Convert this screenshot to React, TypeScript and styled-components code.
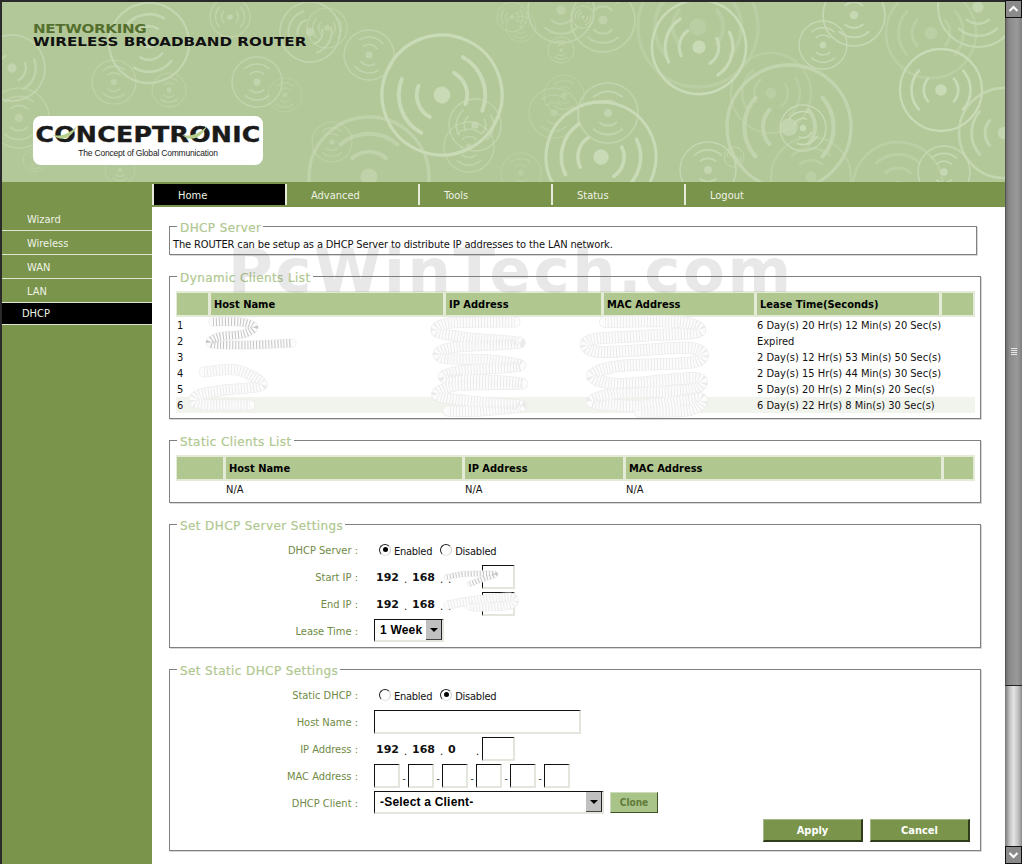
import React from "react";
import styled, { createGlobalStyle } from "styled-components";

const GREEN = "#7a944b";
const PALE = "#b0c890";
const BODY = `"DejaVu Sans Condensed", "DejaVu Sans", Tahoma, sans-serif`;

const Global = createGlobalStyle`
  html, body { margin: 0; padding: 0; background: #fff; overflow: hidden; }
  * { box-sizing: border-box; }
  body { font-family: ${BODY}; font-size: 11px; color: #111; }
`;

const Page = styled.div`position: relative; display: flex; width: 1022px; height: 864px; overflow: hidden;`;
const Viewport = styled.div`flex: 1; min-width: 0; height: 864px; border-top: 2px solid #2a2a2a; border-left: 2px solid #2a2a2a; display: flex; flex-direction: column;`;

/* ---- banner ---- */
const Banner = styled.header`position: relative; height: 180px; background: #b3c899; overflow: hidden; flex: none;`;
const BannerArt = styled.svg`position: absolute; inset: 0; width: 100%; height: 100%;`;
const Titles = styled.div`position: absolute; left: 31px; top: 20px; font-family: "DejaVu Sans", sans-serif; font-weight: 700; font-size: 12.5px; line-height: 13px; transform-origin: 0 0; transform: scaleX(1.21);`;
const TitleTop = styled.div`color: #55702e; letter-spacing: -0.3px;`;
const TitleBottom = styled.div`color: #111;`;
const LogoCard = styled.div`position: absolute; left: 31px; top: 114px; width: 230px; height: 49px; background: #fff; border-radius: 8px; text-align: center; color: #1a1a1a; overflow: hidden;`;
const LogoWord = styled.div`font-family: "DejaVu Sans", sans-serif; font-weight: 700; font-size: 21px; line-height: 24px; margin-top: 7px; transform: scaleX(1.2); letter-spacing: 0.2px; -webkit-text-stroke: 0.4px #1a1a1a;`;
const LogoTag = styled.div`font-family: "Liberation Sans", sans-serif; font-size: 8.5px; line-height: 11px; margin-top: 1px; letter-spacing: -0.2px;`;
const Swoosh = styled.svg`position: absolute; left: 0; top: 0; width: 230px; height: 49px;`;

/* ---- nav ---- */
const NavBar = styled.nav`height: 25px; flex: none; background: ${GREEN}; display: flex; padding: 2px 0 2px 150px;`;
const Tab = styled.a<{ $active?: boolean }>`
  width: 133px; height: 21px; border-left: 2px solid #e6ebdc; padding-left: 24px;
  line-height: 24px; color: #eef2e4; font-size: 11px;
  background: ${(p) => (p.$active ? "#000" : "transparent")};
`;

/* ---- body ---- */
const Main = styled.div`flex: 1; display: flex; min-height: 0;`;
const Sidebar = styled.aside`width: 150px; flex: none; background: ${GREEN};`;
const SideItem = styled.div<{ $active?: boolean }>`
  height: ${(p) => (p.$active ? 22 : 24)}px;
  line-height: ${(p) => (p.$active ? 21 : 25)}px;
  padding-left: ${(p) => (p.$active ? 20 : 25)}px;
  border-bottom: 1px solid #dfe5d3;
  color: #f0f3e8;
  background: ${(p) => (p.$active ? "#000" : "transparent")};
`;
const Content = styled.main`flex: 1; min-width: 0; background: #fff; padding: 12px 0 0 17px;`;

const Box = styled.fieldset<{ $w?: number }>`
  display: block; width: ${(p) => p.$w ?? 812}px; margin: 0 0 14px; min-width: 0;
  padding: 0; border: 1px solid #808080;
  box-shadow: 1px 1px 0 #d8d8d8;
`;
const Legend = styled.legend`
  margin-left: 7px; padding: 0 2px 0 3px; height: 14px; line-height: 18px;
  font-family: "DejaVu Sans", sans-serif; font-size: 12px; color: ${PALE}; letter-spacing: 0.4px; -webkit-text-stroke: 0.2px ${PALE};
`;
const Intro = styled.p`margin: 0; padding: 3px 0 0 3px; height: 21px; line-height: 18px; letter-spacing: -0.13px; white-space: nowrap;`;
const TableWrap = styled.div<{ $top: number; $bottom: number }>`padding: ${(p) => p.$top}px 0 ${(p) => p.$bottom}px 6px;`;
const Table = styled.table`border-collapse: separate; border-spacing: 0; table-layout: fixed; width: 799px;`;
const Head = styled.th`
  height: 26px; padding: 0 0 0 3px; background: ${PALE}; border: 2px solid #e3ebd6; border-left-width: 1px; border-right-width: 2px;
  text-align: left; font-size: 11px; font-weight: 700; color: #000;
`;
const Cell = styled.td`height: 16px; padding: 2px 0 0 1px; line-height: 14px; white-space: nowrap;`;
const Row = styled.tr<{ $shade?: boolean }>`background: ${(p) => (p.$shade ? "#f1f4ec" : "transparent")};`;

const Form = styled.div<{ $bottom: number }>`padding: 5px 10px ${(p) => p.$bottom}px 0;`;
const FormRow = styled.div`display: flex; align-items: center; height: 27px;`;
const Label = styled.label`width: 188px; flex: none; text-align: right; color: #6f8a45; margin-right: 16px; white-space: nowrap; padding-top: 2px;`;
const Radio = styled.input.attrs({ type: "radio", readOnly: true })`
  appearance: none; width: 12px; height: 12px; margin: 0 3px 0 5px; border-radius: 50%; background: #fff;
  border: 1px solid; border-color: #222 #cfcfcf #e4e4e4 #222; position: relative; flex: none;
  &:checked::after { content: ""; position: absolute; left: 2.5px; top: 2.5px; width: 5px; height: 5px; border-radius: 50%; background: #000; }
`;
const RadioText = styled.span`margin-right: 3px; line-height: 14px; padding-top: 4px; letter-spacing: -0.25px;`;
const Octet = styled.span`display: grid; grid-template-columns: 28px 8px; width: 36px; flex: none; padding-top: 2px; font-family: "DejaVu Sans", sans-serif; font-weight: 700; font-size: 11px; color: #111;`;
const Dot = styled.span`font-weight: 400; padding-top: 3px; font-size: 10px;`;
const Octets = styled.div`display: flex; align-items: center; padding-left: 2px; `;
const Field = styled.input.attrs({ type: "text", readOnly: true })<{ $w: number }>`
  width: ${(p) => p.$w}px; height: 24px; padding: 0; flex: none; background: #fff; outline: none;
  border-style: solid; border-width: 1px 2px 2px 1px; border-color: #111 #e3e6dd #e3e6dd #111;
`;
const OctetField = styled(Field)`margin-left: -2px;`;
const MacGroup = styled.div`display: flex; align-items: center;`;
const Dash = styled.span`width: 8px; text-align: center; font-size: 10px; padding-top: 6px; color: #333;`;
const SelectBox = styled.div<{ $w: number }>`
  position: relative; width: ${(p) => p.$w}px; height: 23px; flex: none;
`;
const Select = styled.select`
  appearance: none; display: block; width: 100%; height: 100%; background: #fff; padding: 0 0 0 5px; border-radius: 0; outline: none;
  border-style: solid; border-width: 1px 2px 2px 1px; border-color: #111 #e3e6dd #e3e6dd #111;
  font-family: "Liberation Sans", sans-serif; font-weight: 700; font-size: 12px; color: #000; letter-spacing: 0.2px;
`;
const Arrow = styled.span`
  position: absolute; right: 2px; top: 1px; width: 16px; height: 20px; background: #c0c0c0; display: flex; align-items: center; justify-content: center;
  border-right: 1px solid #222; border-bottom: 1px solid #444;
  &::after { content: ""; border: 4px solid transparent; border-top: 4px solid #000; border-bottom: 0; }
`;
const Clone = styled.button`
  margin-left: 6px; width: 48px; height: 21px; padding: 0; background: #a9c488; color: #5f7a3a; font-family: ${BODY}; font-weight: 700; font-size: 10px;
  border: 1px solid; border-color: #cfdcbc #3f5226 #3f5226 #cfdcbc;
`;
const Actions = styled.div`display: flex; justify-content: flex-end; gap: 7px; margin-top: 3px;`;
const ActionButton = styled.button`
  width: 100px; height: 23px; padding: 0; background: ${GREEN}; color: #fff; font-family: ${BODY}; font-weight: 700; font-size: 11px;
  border: 1px solid; border-color: #a6b98a #2f3d1a #2f3d1a #a6b98a; border-width: 1px 2px 2px 1px;
`;

/* ---- scrollbar ---- */
const Scroll = styled.div`width: 17px; flex: none; height: 864px; display: flex; flex-direction: column; background: #111;`;
const ScrollBtn = styled.div`height: 18px; flex: none; background: #8a8a8a; border: 1px solid #111; display: flex; align-items: center; justify-content: center;`;
const Thumb = styled.div`height: 668px; flex: none; background: linear-gradient(90deg, #6f6f6f 0%, #8a8a8a 20%, #9a9a9a 70%, #7f7f7f 100%); border-bottom: 1px solid #222; border-left: 1px solid #555; display: flex; align-items: center; justify-content: center;`;
const Grip = styled.div`width: 6px; height: 7px; background: repeating-linear-gradient(180deg, #e8e8e8 0 1px, transparent 1px 2px);`;
const Track = styled.div`flex: 1; background: linear-gradient(90deg, #777 0%, #bdbdbd 25%, #e4e4e4 50%, #bdbdbd 80%, #8a8a8a 100%);`;

/* ---- overlays ---- */
const Watermark = styled.div`
  position: absolute; left: 228px; top: 240px; font-family: "DejaVu Sans", sans-serif; font-weight: 700; font-size: 61px; line-height: 62px; letter-spacing: 2.6px;
  color: rgba(110, 110, 110, 0.16); white-space: nowrap; pointer-events: none;
`;
const Scribbles = styled.svg`position: absolute; left: 0; top: 0; width: 1022px; height: 864px; pointer-events: none;`;

type Ring = [number, number, number, number, number];
const rings: Ring[] = [
  [440, 93, 60, -20, 1], [473, 123, 26, 10, .7], [147, 41, 40, 80, .8], [367, 53, 25, 100, .7], [308, 30, 30, 30, .7], [325, 26, 20, 0, .6],
  [112, 80, 22, 90, .6], [167, 88, 17, 90, .6], [255, 80, 25, 90, .7], [283, 93, 17, 90, .4], [10, 66, 33, 20, .7], [17, 116, 30, 90, .5],
  [330, 140, 20, 90, .5], [367, 175, 60, 90, .6], [467, 145, 25, 90, .6], [118, 168, 15, 90, .5], [33, 158, 12, 90, .4], [228, 15, 20, 0, .7], [510, 15, 15, 0, .5],
  [697, 45, 47, 15, 1], [696, 25, 60, 0, .35], [601, 18, 32, 90, .6], [559, 8, 33, 90, .6], [559, 48, 13, 90, .6], [581, 15, 11, 30, .7], [519, 25, 15, 90, .4],
  [606, 111, 30, 90, .7], [562, 93, 20, 90, .4], [599, 155, 55, 15, 1], [706, 168, 28, 90, .8], [732, 155, 10, 40, .7], [821, 43, 24, 90, .9], [852, 13, 31, 90, .9],
  [939, 88, 41, 0, 1], [929, 31, 45, 0, .4], [976, 5, 40, 90, .8], [787, 125, 62, 0, .7], [769, 91, 40, 10, .35], [801, 126, 23, 70, 1], [942, 170, 26, 90, .9],
  [1002, 131, 45, 0, .8], [519, 171, 20, 90, .4], [552, 111, 25, 90, .4], [809, 175, 40, 90, .4], [896, 185, 45, 90, .4],
];

function WifiRing({ r: [x, y, r, rot, o] }: { r: Ring }) {
  const sw = Math.max(1, r * 0.055);
  const arc = (k: number) => {
    const R = r * k, a = 0.72;
    const dx = R * Math.cos(a), dy = R * Math.sin(a);
    return `M${-dx} ${-dy}A${R} ${R} 0 0 0 ${-dx} ${dy}M${dx} ${-dy}A${R} ${R} 0 0 1 ${dx} ${dy}`;
  };
  return (
    <g transform={`translate(${x} ${y}) rotate(${rot})`} opacity={o} fill="none" stroke="#c9dab6" strokeLinecap="round">
      <circle r={r} strokeWidth={sw} />
      <circle r={r * 0.14} fill="#c9dab6" stroke="none" />
      <path d={arc(0.42)} strokeWidth={sw * 1.2} />
      <path d={arc(0.72)} strokeWidth={sw * 1.2} />
    </g>
  );
}

function smooth(p: number[][]) {
  let d = `M${p[0][0]} ${p[0][1]}`;
  for (let i = 0; i < p.length - 1; i++) {
    const a = p[Math.max(0, i - 1)], b = p[i], c = p[i + 1], e = p[Math.min(p.length - 1, i + 2)];
    d += `C${b[0] + (c[0] - a[0]) / 6} ${b[1] + (c[1] - a[1]) / 6} ${c[0] - (e[0] - b[0]) / 6} ${c[1] - (e[1] - b[1]) / 6} ${c[0]} ${c[1]}`;
  }
  return d;
}

function Coil({ pts, w = 11, dark }: { pts: number[][]; w?: number; dark?: boolean }) {
  const d = smooth(pts);
  return (
    <g fill="none" strokeLinecap="round" strokeLinejoin="round">
      <path d={d} stroke="#ececec" strokeWidth={w} opacity={0.95} />
      <path d={d} stroke="#fcfcfc" strokeWidth={w - 1.5} />
      <path d={d} stroke={dark ? "#c4c4c4" : "#ebebeb"} strokeWidth={w - 1} strokeDasharray="1 2" strokeLinecap="butt" />
    </g>
  );
}

const dyn = [
  ["1", "6 Day(s) 20 Hr(s) 12 Min(s) 20 Sec(s)"],
  ["2", "Expired"],
  ["3", "2 Day(s) 12 Hr(s) 53 Min(s) 50 Sec(s)"],
  ["4", "2 Day(s) 15 Hr(s) 44 Min(s) 30 Sec(s)"],
  ["5", "5 Day(s) 20 Hr(s) 2 Min(s) 20 Sec(s)"],
  ["6", "6 Day(s) 22 Hr(s) 8 Min(s) 30 Sec(s)"],
];

function IpPrefix({ third }: { third?: string }) {
  return (
    <>
      <Octet>192<Dot>.</Dot></Octet>
      <Octet>168<Dot>.</Dot></Octet>
      <Octet>{third ?? ""}<Dot>.</Dot></Octet>
    </>
  );
}

export default function App() {
  return (
    <Page>
      <Global />
      <Viewport>
        <Banner>
          <BannerArt viewBox="0 0 1003 180">
            {rings.map((r, i) => <WifiRing key={i} r={r} />)}
          </BannerArt>
          <Titles>
            <TitleTop>NETWORKING</TitleTop>
            <TitleBottom>WIRELESS BROADBAND ROUTER</TitleBottom>
          </Titles>
          <LogoCard>
            <LogoWord>CONCEPTRONIC</LogoWord>
            <LogoTag>The Concept of Global Communication</LogoTag>
            <Swoosh viewBox="0 0 230 49">
              <path d="M20 19C28 21 36 18 44 10C38 23 28 26 20 19Z" fill="#b7cf8c" />
              <path d="M149 19C157 21 166 18 174 10C168 23 157 26 149 19Z" fill="#b7cf8c" />
            </Swoosh>
          </LogoCard>
        </Banner>
        <NavBar>
          <Tab $active>Home</Tab>
          <Tab>Advanced</Tab>
          <Tab>Tools</Tab>
          <Tab>Status</Tab>
          <Tab>Logout</Tab>
        </NavBar>
        <Main>
          <Sidebar>
            <SideItem>Wizard</SideItem>
            <SideItem>Wireless</SideItem>
            <SideItem>WAN</SideItem>
            <SideItem>LAN</SideItem>
            <SideItem $active>DHCP</SideItem>
          </Sidebar>
          <Content>
            <Box $w={808}>
              <Legend>DHCP Server</Legend>
              <Intro>The ROUTER can be setup as a DHCP Server to distribute IP addresses to the LAN network.</Intro>
            </Box>
            <Box>
              <Legend>Dynamic Clients List</Legend>
              <TableWrap $top={8} $bottom={5}>
                <Table>
                  <colgroup>
                    <col width="34" /><col width="235" /><col width="158" /><col width="153" /><col width="185" /><col width="34" />
                  </colgroup>
                  <thead>
                    <tr><Head /><Head>Host Name</Head><Head>IP Address</Head><Head>MAC Address</Head><Head>Lease Time(Seconds)</Head><Head /></tr>
                  </thead>
                  <tbody>
                    {dyn.map(([n, t], i) => (
                      <Row key={n} $shade={i === 5}>
                        <Cell>{n}</Cell><Cell /><Cell /><Cell /><Cell>{t}</Cell><Cell />
                      </Row>
                    ))}
                  </tbody>
                </Table>
              </TableWrap>
            </Box>
            <Box>
              <Legend>Static Clients List</Legend>
              <TableWrap $top={8} $bottom={5}>
                <Table>
                  <colgroup>
                    <col width="49" /><col width="239" /><col width="161" /><col width="318" /><col width="32" />
                  </colgroup>
                  <thead>
                    <tr><Head /><Head>Host Name</Head><Head>IP Address</Head><Head>MAC Address</Head><Head /></tr>
                  </thead>
                  <tbody>
                    <Row><Cell /><Cell>N/A</Cell><Cell>N/A</Cell><Cell>N/A</Cell><Cell /></Row>
                  </tbody>
                </Table>
              </TableWrap>
            </Box>
            <Box>
              <Legend>Set DHCP Server Settings</Legend>
              <Form $bottom={3}>
                <FormRow>
                  <Label>DHCP Server :</Label>
                  <Radio name="srv" defaultChecked /><RadioText>Enabled</RadioText>
                  <Radio name="srv" /><RadioText>Disabled</RadioText>
                </FormRow>
                <FormRow>
                  <Label>Start IP :</Label>
                  <Octets><IpPrefix /><OctetField $w={33} /></Octets>
                </FormRow>
                <FormRow>
                  <Label>End IP :</Label>
                  <Octets><IpPrefix /><OctetField $w={33} /></Octets>
                </FormRow>
                <FormRow>
                  <Label>Lease Time :</Label>
                  <SelectBox $w={70}>
                    <Select defaultValue="1 Week"><option>1 Week</option></Select>
                    <Arrow />
                  </SelectBox>
                </FormRow>
              </Form>
            </Box>
            <Box>
              <Legend>Set Static DHCP Settings</Legend>
              <Form $bottom={8}>
                <FormRow>
                  <Label>Static DHCP :</Label>
                  <Radio name="st" /><RadioText>Enabled</RadioText>
                  <Radio name="st" defaultChecked /><RadioText>Disabled</RadioText>
                </FormRow>
                <FormRow>
                  <Label>Host Name :</Label>
                  <Field $w={207} />
                </FormRow>
                <FormRow>
                  <Label>IP Address :</Label>
                  <Octets><IpPrefix third="0" /><OctetField $w={33} /></Octets>
                </FormRow>
                <FormRow>
                  <Label>MAC Address :</Label>
                  <MacGroup>
                    <Field $w={26} /><Dash>-</Dash><Field $w={26} /><Dash>-</Dash><Field $w={26} /><Dash>-</Dash>
                    <Field $w={26} /><Dash>-</Dash><Field $w={26} /><Dash>-</Dash><Field $w={26} />
                  </MacGroup>
                </FormRow>
                <FormRow>
                  <Label>DHCP Client :</Label>
                  <SelectBox $w={230}>
                    <Select defaultValue="-Select a Client-"><option>-Select a Client-</option></Select>
                    <Arrow />
                  </SelectBox>
                  <Clone>Clone</Clone>
                </FormRow>
                <Actions>
                  <ActionButton>Apply</ActionButton>
                  <ActionButton>Cancel</ActionButton>
                </Actions>
              </Form>
            </Box>
          </Content>
        </Main>
      </Viewport>
      <Scroll>
        <ScrollBtn>
          <svg width="11" height="8" viewBox="0 0 11 8"><path d="M1.5 6L5.5 2L9.5 6" fill="none" stroke="#fff" strokeWidth="2" /></svg>
        </ScrollBtn>
        <Thumb><Grip /></Thumb>
        <Track />
        <ScrollBtn>
          <svg width="11" height="8" viewBox="0 0 11 8"><path d="M1.5 2L5.5 6L9.5 2" fill="none" stroke="#fff" strokeWidth="2" /></svg>
        </ScrollBtn>
      </Scroll>
      <Watermark>PcWinTech.com</Watermark>
      <Scribbles viewBox="0 0 1022 864">
        <Coil dark pts={[[213, 322], [240, 322], [254, 327], [243, 334], [218, 337], [212, 344], [250, 345], [292, 343]]} w={9} />
        <Coil pts={[[204, 372], [237, 370], [262, 385], [225, 390], [198, 395], [200, 404], [250, 405]]} w={11} />
        <Coil pts={[[515, 322], [450, 323], [437, 332], [470, 338], [520, 343], [450, 348], [442, 358], [490, 360], [520, 366], [460, 371], [445, 378], [490, 380], [522, 384], [455, 386], [438, 396], [480, 402], [522, 406], [480, 411], [448, 411]]} w={11} />
        <Coil pts={[[605, 322], [680, 322], [698, 332], [640, 336], [590, 340], [600, 352], [690, 348], [695, 362], [620, 366], [592, 376], [620, 384], [695, 378], [690, 390], [620, 393], [592, 402], [640, 406], [698, 398], [690, 410], [640, 412]]} w={12} />
        <Coil dark pts={[[447, 577], [465, 574], [495, 574], [480, 580], [470, 584]]} w={6} />
        <Coil pts={[[448, 605], [470, 601], [510, 597], [510, 605], [480, 607], [470, 606]]} w={9} />
      </Scribbles>
    </Page>
  );
}
